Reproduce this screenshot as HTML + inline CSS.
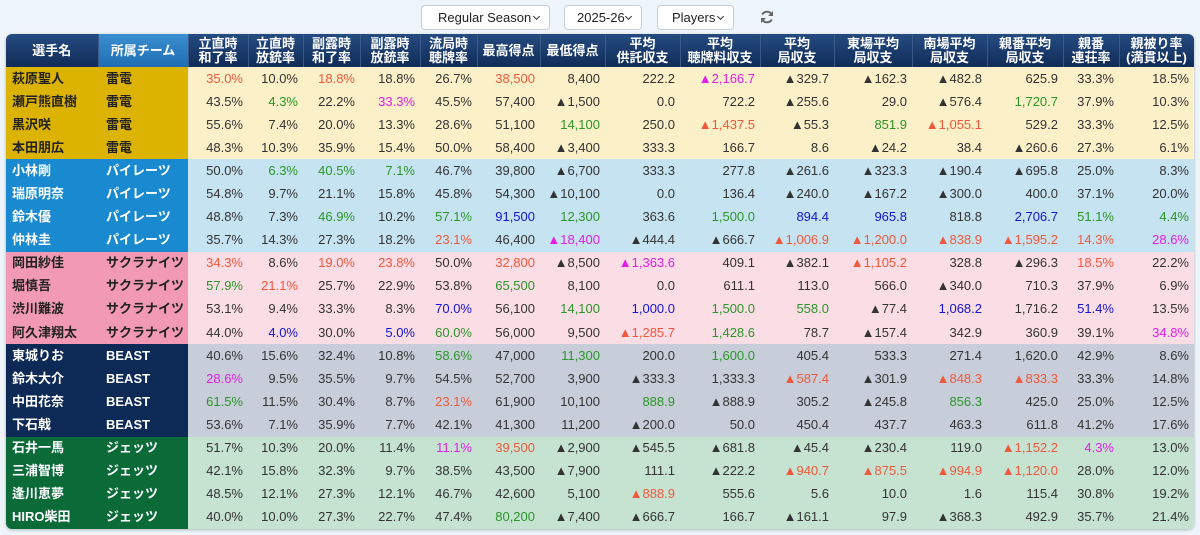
<!DOCTYPE html>
<html><head><meta charset="utf-8">
<style>
html,body{margin:0;padding:0;}
body{width:1200px;height:535px;background:#eef5fa;font-family:"Liberation Sans","Noto Sans CJK JP",sans-serif;overflow:hidden;position:relative;}
.ctl{position:absolute;top:5px;height:25px;border:1px solid #c9ced4;border-radius:4px;background:#fff;font-size:13px;color:#222;box-sizing:border-box;line-height:23px;padding-left:12px;}
.ctl:after{content:"";position:absolute;right:10px;top:8px;width:4px;height:4px;border-right:1.5px solid #333;border-bottom:1.5px solid #333;transform:rotate(45deg);}
.wrap{position:absolute;left:6px;top:34px;width:1188px;border-radius:6px;overflow:hidden;box-shadow:0 1px 3px rgba(0,0,0,.25);}
table{border-collapse:collapse;table-layout:fixed;width:1188px;font-size:13px;}
th{background:linear-gradient(#254b80,#102c58);color:#fff;font-weight:bold;font-size:13px;line-height:14px;height:33px;padding:0;text-align:center;border-right:1px solid #3a5a88;}
th.tm{background:linear-gradient(#3a8fd0,#1f6db3);}
tr{height:23.1px;}
td{height:23.1px;line-height:16px;padding:0 5px 0 0;text-align:right;color:#333;white-space:nowrap;overflow:hidden;}
td.n,td.t{text-align:left;padding-left:6px;font-weight:bold;}
td.t{padding-left:8px;}
.rai td.n,.rai td.t{background:#dbb300;color:#222;}
.rai td{background:#fbf0c8;}
.pir td.n,.pir td.t{background:#198ad0;color:#fff;}
.pir td{background:#c6e3f2;}
.sak td.n,.sak td.t{background:#f29ab5;color:#222;}
.sak td{background:#fbdde6;}
.bea td.n,.bea td.t{background:#0d2a56;color:#fff;}
.bea td{background:#c8ced9;}
.jet td.n,.jet td.t{background:#0a6a38;color:#fff;}
.jet td{background:#c6e3d2;}
.r{color:#f0583c!important}.g{color:#2a9628!important}.m{color:#e01ee6!important}.b{color:#1414d2!important}
</style></head><body>
<div class="ctl" style="left:421px;width:129px;padding-left:16px">Regular Season</div>
<div class="ctl" style="left:564px;width:78px">2025-26</div>
<div class="ctl" style="left:657px;width:77px;padding-left:14px">Players</div>
<svg style="position:absolute;left:759px;top:9px" width="16" height="16" viewBox="0 0 16 16"><path d="M13 6A5.5 5.5 0 0 0 3.2 5.5M3 10a5.5 5.5 0 0 0 9.8.5" fill="none" stroke="#666" stroke-width="2"/><path d="M14 2v5h-5z M2 14V9h5z" fill="#666"/></svg>
<div class="wrap"><table>
<colgroup><col style="width:92px"><col style="width:90px"><col style="width:60px"><col style="width:55px"><col style="width:57px"><col style="width:60px"><col style="width:57px"><col style="width:63px"><col style="width:65px"><col style="width:75px"><col style="width:80px"><col style="width:74px"><col style="width:78px"><col style="width:75px"><col style="width:76px"><col style="width:56px"><col style="width:75px"></colgroup>
<tr style="height:33px"><th>選手名</th><th class="tm">所属チーム</th><th>立直時<br>和了率</th><th>立直時<br>放銃率</th><th>副露時<br>和了率</th><th>副露時<br>放銃率</th><th>流局時<br>聴牌率</th><th>最高得点</th><th>最低得点</th><th>平均<br>供託収支</th><th>平均<br>聴牌料収支</th><th>平均<br>局収支</th><th>東場平均<br>局収支</th><th>南場平均<br>局収支</th><th>親番平均<br>局収支</th><th>親番<br>連荘率</th><th>親被り率<br>(満貫以上)</th></tr>
<tr class="rai"><td class="n">萩原聖人</td><td class="t">雷電</td><td class="r">35.0%</td><td>10.0%</td><td class="r">18.8%</td><td>18.8%</td><td>26.7%</td><td class="r">38,500</td><td>8,400</td><td>222.2</td><td class="m">▲2,166.7</td><td>▲329.7</td><td>▲162.3</td><td>▲482.8</td><td>625.9</td><td>33.3%</td><td>18.5%</td></tr>
<tr class="rai"><td class="n">瀬戸熊直樹</td><td class="t">雷電</td><td>43.5%</td><td class="g">4.3%</td><td>22.2%</td><td class="m">33.3%</td><td>45.5%</td><td>57,400</td><td>▲1,500</td><td>0.0</td><td>722.2</td><td>▲255.6</td><td>29.0</td><td>▲576.4</td><td class="g">1,720.7</td><td>37.9%</td><td>10.3%</td></tr>
<tr class="rai"><td class="n">黒沢咲</td><td class="t">雷電</td><td>55.6%</td><td>7.4%</td><td>20.0%</td><td>13.3%</td><td>28.6%</td><td>51,100</td><td class="g">14,100</td><td>250.0</td><td class="r">▲1,437.5</td><td>▲55.3</td><td class="g">851.9</td><td class="r">▲1,055.1</td><td>529.2</td><td>33.3%</td><td>12.5%</td></tr>
<tr class="rai"><td class="n">本田朋広</td><td class="t">雷電</td><td>48.3%</td><td>10.3%</td><td>35.9%</td><td>15.4%</td><td>50.0%</td><td>58,400</td><td>▲3,400</td><td>333.3</td><td>166.7</td><td>8.6</td><td>▲24.2</td><td>38.4</td><td>▲260.6</td><td>27.3%</td><td>6.1%</td></tr>
<tr class="pir"><td class="n">小林剛</td><td class="t">パイレーツ</td><td>50.0%</td><td class="g">6.3%</td><td class="g">40.5%</td><td class="g">7.1%</td><td>46.7%</td><td>39,800</td><td>▲6,700</td><td>333.3</td><td>277.8</td><td>▲261.6</td><td>▲323.3</td><td>▲190.4</td><td>▲695.8</td><td>25.0%</td><td>8.3%</td></tr>
<tr class="pir"><td class="n">瑞原明奈</td><td class="t">パイレーツ</td><td>54.8%</td><td>9.7%</td><td>21.1%</td><td>15.8%</td><td>45.8%</td><td>54,300</td><td>▲10,100</td><td>0.0</td><td>136.4</td><td>▲240.0</td><td>▲167.2</td><td>▲300.0</td><td>400.0</td><td>37.1%</td><td>20.0%</td></tr>
<tr class="pir"><td class="n">鈴木優</td><td class="t">パイレーツ</td><td>48.8%</td><td>7.3%</td><td class="g">46.9%</td><td>10.2%</td><td class="g">57.1%</td><td class="b">91,500</td><td class="g">12,300</td><td>363.6</td><td class="g">1,500.0</td><td class="b">894.4</td><td class="b">965.8</td><td>818.8</td><td class="b">2,706.7</td><td class="g">51.1%</td><td class="g">4.4%</td></tr>
<tr class="pir"><td class="n">仲林圭</td><td class="t">パイレーツ</td><td>35.7%</td><td>14.3%</td><td>27.3%</td><td>18.2%</td><td class="r">23.1%</td><td>46,400</td><td class="m">▲18,400</td><td>▲444.4</td><td>▲666.7</td><td class="r">▲1,006.9</td><td class="r">▲1,200.0</td><td class="r">▲838.9</td><td class="r">▲1,595.2</td><td class="r">14.3%</td><td class="m">28.6%</td></tr>
<tr class="sak"><td class="n">岡田紗佳</td><td class="t">サクラナイツ</td><td class="r">34.3%</td><td>8.6%</td><td class="r">19.0%</td><td class="r">23.8%</td><td>50.0%</td><td class="r">32,800</td><td>▲8,500</td><td class="m">▲1,363.6</td><td>409.1</td><td>▲382.1</td><td class="r">▲1,105.2</td><td>328.8</td><td>▲296.3</td><td class="r">18.5%</td><td>22.2%</td></tr>
<tr class="sak"><td class="n">堀慎吾</td><td class="t">サクラナイツ</td><td class="g">57.9%</td><td class="r">21.1%</td><td>25.7%</td><td>22.9%</td><td>53.8%</td><td class="g">65,500</td><td>8,100</td><td>0.0</td><td>611.1</td><td>113.0</td><td>566.0</td><td>▲340.0</td><td>710.3</td><td>37.9%</td><td>6.9%</td></tr>
<tr class="sak"><td class="n">渋川難波</td><td class="t">サクラナイツ</td><td>53.1%</td><td>9.4%</td><td>33.3%</td><td>8.3%</td><td class="b">70.0%</td><td>56,100</td><td class="g">14,100</td><td class="b">1,000.0</td><td class="g">1,500.0</td><td class="g">558.0</td><td>▲77.4</td><td class="b">1,068.2</td><td>1,716.2</td><td class="b">51.4%</td><td>13.5%</td></tr>
<tr class="sak"><td class="n">阿久津翔太</td><td class="t">サクラナイツ</td><td>44.0%</td><td class="b">4.0%</td><td>30.0%</td><td class="b">5.0%</td><td class="g">60.0%</td><td>56,000</td><td>9,500</td><td class="r">▲1,285.7</td><td class="g">1,428.6</td><td>78.7</td><td>▲157.4</td><td>342.9</td><td>360.9</td><td>39.1%</td><td class="m">34.8%</td></tr>
<tr class="bea"><td class="n">東城りお</td><td class="t">BEAST</td><td>40.6%</td><td>15.6%</td><td>32.4%</td><td>10.8%</td><td class="g">58.6%</td><td>47,000</td><td class="g">11,300</td><td>200.0</td><td class="g">1,600.0</td><td>405.4</td><td>533.3</td><td>271.4</td><td>1,620.0</td><td>42.9%</td><td>8.6%</td></tr>
<tr class="bea"><td class="n">鈴木大介</td><td class="t">BEAST</td><td class="m">28.6%</td><td>9.5%</td><td>35.5%</td><td>9.7%</td><td>54.5%</td><td>52,700</td><td>3,900</td><td>▲333.3</td><td>1,333.3</td><td class="r">▲587.4</td><td>▲301.9</td><td class="r">▲848.3</td><td class="r">▲833.3</td><td>33.3%</td><td>14.8%</td></tr>
<tr class="bea"><td class="n">中田花奈</td><td class="t">BEAST</td><td class="g">61.5%</td><td>11.5%</td><td>30.4%</td><td>8.7%</td><td class="r">23.1%</td><td>61,900</td><td>10,100</td><td class="g">888.9</td><td>▲888.9</td><td>305.2</td><td>▲245.8</td><td class="g">856.3</td><td>425.0</td><td>25.0%</td><td>12.5%</td></tr>
<tr class="bea"><td class="n">下石戟</td><td class="t">BEAST</td><td>53.6%</td><td>7.1%</td><td>35.9%</td><td>7.7%</td><td>42.1%</td><td>41,300</td><td>11,200</td><td>▲200.0</td><td>50.0</td><td>450.4</td><td>437.7</td><td>463.3</td><td>611.8</td><td>41.2%</td><td>17.6%</td></tr>
<tr class="jet"><td class="n">石井一馬</td><td class="t">ジェッツ</td><td>51.7%</td><td>10.3%</td><td>20.0%</td><td>11.4%</td><td class="m">11.1%</td><td class="r">39,500</td><td>▲2,900</td><td>▲545.5</td><td>▲681.8</td><td>▲45.4</td><td>▲230.4</td><td>119.0</td><td class="r">▲1,152.2</td><td class="m">4.3%</td><td>13.0%</td></tr>
<tr class="jet"><td class="n">三浦智博</td><td class="t">ジェッツ</td><td>42.1%</td><td>15.8%</td><td>32.3%</td><td>9.7%</td><td>38.5%</td><td>43,500</td><td>▲7,900</td><td>111.1</td><td>▲222.2</td><td class="r">▲940.7</td><td class="r">▲875.5</td><td class="r">▲994.9</td><td class="r">▲1,120.0</td><td>28.0%</td><td>12.0%</td></tr>
<tr class="jet"><td class="n">逢川恵夢</td><td class="t">ジェッツ</td><td>48.5%</td><td>12.1%</td><td>27.3%</td><td>12.1%</td><td>46.7%</td><td>42,600</td><td>5,100</td><td class="r">▲888.9</td><td>555.6</td><td>5.6</td><td>10.0</td><td>1.6</td><td>115.4</td><td>30.8%</td><td>19.2%</td></tr>
<tr class="jet"><td class="n">HIRO柴田</td><td class="t">ジェッツ</td><td>40.0%</td><td>10.0%</td><td>27.3%</td><td>22.7%</td><td>47.4%</td><td class="g">80,200</td><td>▲7,400</td><td>▲666.7</td><td>166.7</td><td>▲161.1</td><td>97.9</td><td>▲368.3</td><td>492.9</td><td>35.7%</td><td>21.4%</td></tr>
</table></div>
</body></html>
